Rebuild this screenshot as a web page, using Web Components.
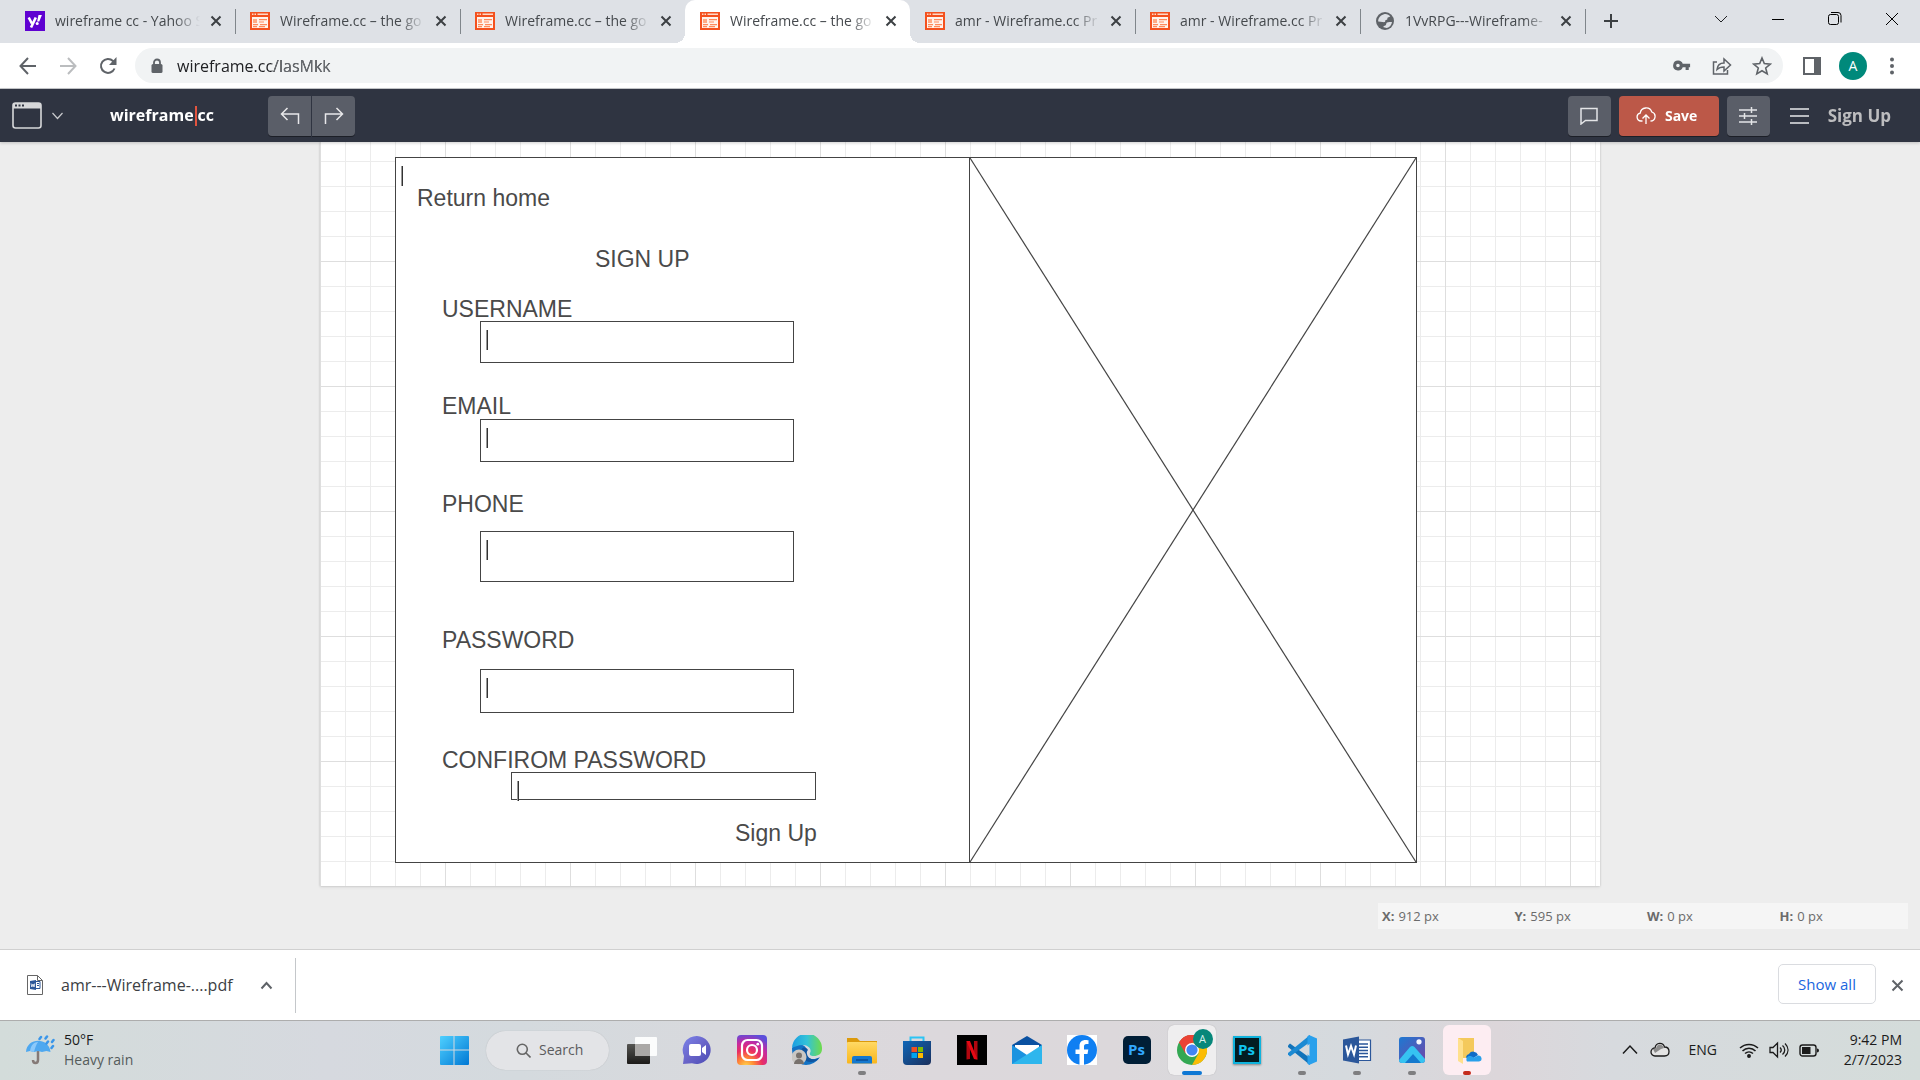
<!DOCTYPE html>
<html lang="en">
<head>
<meta charset="utf-8">
<title>Wireframe.cc – the go-to wireframing tool</title>
<style>
  html, body { margin: 0; height: 100%; }
  body { font-family: "Open Sans", "Noto Sans", sans-serif; font-size: 14px; line-height: 20px; color: #202124; overflow: hidden; }
</style>
</head>
<body>
<desktop-screen></desktop-screen>

<script>
const BASE = `
  *, *::before, *::after { box-sizing: border-box; }
  button { font: inherit; color: inherit; background: none; border: 0; padding: 0; margin: 0; display: inline-flex; align-items: center; justify-content: center; }
  a { color: inherit; text-decoration: none; }
  svg { display: block; flex: none; }
`;
const define = (name, render, after) => customElements.define(name, class extends HTMLElement {
  connectedCallback() {
    if (this.shadowRoot) return;
    const root = this.attachShadow({ mode: "open" });
    const t = document.createElement("template");
    t.innerHTML = `<style>${BASE}</style>` + render(this);
    root.append(t.content.cloneNode(true));
    if (after) after(this, root);
  }
});

const FAVICONS = {
  yahoo: `<svg width="20" height="20" viewBox="0 0 20 20"><path fill="#5f01d1" d="M0 0h20v20H0z"/><path fill="none" stroke="#fff" stroke-width="2.6" d="M3.7 6.5l3.2 6M10.800 6.500L6 16.500"/><path fill="#fff" d="M13.500 4h3.400l-2.600 6.500h-2.200z"/><circle cx="12.200" cy="12.600" r="1.500" fill="#fff"/></svg>`,
  wire: `<svg width="20" height="20" viewBox="0 0 20 20"><rect x="1" y="2" width="18" height="16" fill="#fff3ec" stroke="#f4511e" stroke-width="2"/><path fill="#f4511e" d="M0 1h20v5H0z"/><path fill="#ffd9c7" d="M2 2.500h1.500V4H2zM4.500 2.500H6V4H4.500zM7.500 2.500H18V4H7.500z"/><path fill="#ffab85" d="M3 8h4v4H3z"/><path stroke="#ff8a5c" stroke-width="1.200" d="M9 8.600h8M9 11h5M3 13.700h5M10 13.700h7M3 15.700h4M9 15.700h6"/></svg>`,
  globe: `<svg width="20" height="20" viewBox="0 0 20 20"><circle cx="10" cy="10" r="9" fill="#5f6368"/><path fill="#dee1e6" d="M9 3.200c2.500-.6 5 .5 6.300 2.300-1 .2-1.500 1-2.600.9-.7.800.2 2-1 2.400-1 .3-1.700.400-1.500 1.500.1 1.100-1.600.8-2.700.8-1.200 0-2.600-.2-4.300-.500C3 7 5.500 4 9 3.200zM12 11.500c1.500-1 3-.5 5-.5-.3 3-2.500 5.400-5.200 6-1.300-.6-3-.3-3.600-1 .4-1.300 2.200-1 2.700-1.900.400-.8.2-1.900 1.100-2.600z"/></svg>`
};

define("browser-tab", el => `
  <style>
    :host { flex: 0 1 225px; min-width: 0; position: relative; display: flex; align-items: center; height: 43px; padding: 0 13px 2px 15px; gap: 10px; color: #45494d; }
    :host([active]) { background: #fff; border-radius: 10px 10px 0 0; }
    :host([active])::before, :host([active])::after { content: ""; position: absolute; bottom: 0; width: 10px; height: 10px; }
    :host([active])::before { right: 100%; background: radial-gradient(circle at 0 0, transparent 10px, #fff 10px); }
    :host([active])::after { left: 100%; background: radial-gradient(circle at 100% 0, transparent 10px, #fff 10px); }
    :host([divider])::after { content: ""; position: absolute; right: -1px; top: 9px; width: 1px; height: 25px; background: #80868b; }
    .t { flex: 1; min-width: 0; overflow: hidden; white-space: nowrap; -webkit-mask: linear-gradient(90deg, #000 calc(100% - 26px), transparent); }
  </style>
  ${FAVICONS[el.getAttribute("icon")]}
  <span class="t"><slot></slot></span>
  <button aria-label="Close tab"><svg width="12" height="12" viewBox="0 0 12 12" stroke="#3c4043" stroke-width="2"><path d="M1.500 1.500l9 9M10.500 1.500l-9 9"/></svg></button>`);

define("tab-strip", () => `
  <style>
    :host { display: flex; height: 43px; padding-left: 10px; background: #dee1e6; }
    .new { width: 52px; height: 42px; flex: none; }
    .win { margin-left: auto; display: flex; }
    .win button { width: 57px; height: 38px; }
  </style>
  <browser-tab icon="yahoo" divider>wireframe cc - Yahoo S</browser-tab>
  <browser-tab icon="wire" divider>Wireframe.cc – the go</browser-tab>
  <browser-tab icon="wire">Wireframe.cc – the go</browser-tab>
  <browser-tab icon="wire" active>Wireframe.cc – the go</browser-tab>
  <browser-tab icon="wire" divider>amr - Wireframe.cc Pr</browser-tab>
  <browser-tab icon="wire" divider>amr - Wireframe.cc Pr</browser-tab>
  <browser-tab icon="globe" divider>1VvRPG---Wireframe-</browser-tab>
  <button class="new" aria-label="New tab"><svg width="16" height="16" viewBox="0 0 16 16"><path stroke="#3c4043" stroke-width="2" d="M8 1v14M1 8h14"/></svg></button>
  <div class="win">
    <button aria-label="Search tabs"><svg width="14" height="14" fill="none" stroke="#202124"><path d="M1 4l6 6 6-6"/></svg></button>
    <button aria-label="Minimize"><svg width="14" height="14" stroke="#000"><path d="M1 7.500h12"/></svg></button>
    <button aria-label="Restore"><svg width="14" height="14" fill="none" stroke="#000"><rect x=".5" y="2.500" width="10" height="10" rx="2"/><path d="M3 .500h7a3 3 0 0 1 3 3v7"/></svg></button>
    <button aria-label="Close"><svg width="14" height="14" stroke="#000"><path d="M1 1l12 12M13 1L1 13"/></svg></button>
  </div>`);

define("browser-toolbar", () => `
  <style>
    :host { display: flex; align-items: center; height: 46px; padding: 0 8px; background: #fff; border-bottom: 1px solid #c8cacd; color: #5f6368; }
    .nav { width: 40px; height: 36px; }
    .box { flex: 1; display: flex; align-items: center; height: 35px; margin: 0 7px; padding: 0 11px 0 14px; border-radius: 18px; background: #f1f3f4; }
    .url { position: relative; flex: 1; display: flex; margin-left: 12px; }
    input { flex: 1; border: 0; padding: 0; outline: 0; background: #f1f3f4; color: #202124; font: 16px/24px "Open Sans", "Noto Sans", sans-serif; }
    .path { position: absolute; left: 94px; right: 0; top: 0; bottom: 0; background: #666a6f; mix-blend-mode: lighten; pointer-events: none; }
    .box button { width: 40px; height: 32px; }
    .box button:last-child { width: 20px; margin-left: 10px; }
    .avatar { width: 28px; height: 28px; margin: 0 5px; border-radius: 50%; background: #00897b; color: #fff; }
    .side { width: 44px; }
  </style>
  <button class="nav" aria-label="Back"><svg width="18" height="18" fill="none" stroke="#5f6368" stroke-width="2"><path d="M17 9H2M9 1L1.500 9 9 17"/></svg></button>
  <button class="nav" aria-label="Forward"><svg width="18" height="18" fill="none" stroke="#bbbdbf" stroke-width="2"><path d="M1 9h15M9 1l7.500 8L9 17"/></svg></button>
  <button class="nav" aria-label="Reload"><svg width="18" height="18" fill="none" stroke="#5f6368" stroke-width="2"><path d="M15.500 11.500A7 7 0 1 1 14 4l1.500 1.800"/><path fill="#5f6368" stroke="none" d="M17.500 0v8h-7.500z"/></svg></button>
  <div class="box">
    <svg width="16" height="16" viewBox="0 0 16 16"><rect x="2.500" y="6" width="11" height="9" rx="1.500" fill="#5f6368"/><path fill="none" stroke="#5f6368" stroke-width="1.800" d="M5 7V4.500a3 3 0 0 1 6 0V7"/></svg>
    <div class="url"><input aria-label="Address" value="wireframe.cc/lasMkk"><span class="path"></span></div>
    <button aria-label="Passwords"><svg width="18" height="11" viewBox="0 0 20 12"><path fill="#5f6368" fill-rule="evenodd" d="M6 .500a5.500 5.500 0 1 0 4.800 7.500H14v3h3.500V8H19V4h-8.200A5.500 5.500 0 0 0 6 .500zM5.500 4a2 2 0 1 1 0 4 2 2 0 0 1 0-4z"/></svg></button>
    <button aria-label="Share"><svg width="20" height="20" fill="none" stroke="#5f6368" stroke-width="1.500"><path d="M5 6H1.500v12h14v-4M5 13.500c.5-4.500 3-6.500 7-6.500V3l6.500 6-6.500 6v-4c-3 0-5 .5-7 2.500z"/></svg></button>
    <button aria-label="Bookmark"><svg width="20" height="20" viewBox="0 0 20 20" fill="none" stroke="#5f6368" stroke-width="1.600"><path d="M10 2l2.300 5.600 6 .500-4.600 3.900 1.500 5.900L10 14.700l-5.200 3.200L6.300 12 1.700 8.100l6-.5z"/></svg></button>
  </div>
  <button class="side" aria-label="Side panel"><svg width="18" height="18"><path fill="none" stroke="#5f6368" stroke-width="2" d="M1 1h16v16H1z"/><path fill="#5f6368" d="M11 1h6v16h-6z"/></svg></button>
  <button class="avatar" aria-label="Profile">A</button>
  <button class="nav" aria-label="Menu"><svg width="6" height="18" fill="#5f6368"><circle cx="3" cy="2.500" r="2"/><circle cx="3" cy="9" r="2"/><circle cx="3" cy="15.500" r="2"/></svg></button>`);

define("app-header", () => `
  <style>
    :host { position: relative; z-index: 1; display: flex; align-items: center; height: 53px; padding: 0 29px 0 12px; background: #2f3441; color: #fff; box-shadow: 0 1px 3px #0003; }
    .doc { gap: 10px; }
    .logo { display: flex; width: 110px; margin-left: 47px; font-size: 16px; font-weight: 700; }
    .logo i { width: 2px; height: 20px; margin: 1px 1px 0; background: #e2543f; }
    .undo { display: flex; gap: 1px; margin-left: 48px; }
    .b { width: 43px; height: 40px; border-radius: 4px; background: #5a5e68; box-shadow: 0 1px 0 #1c1f27; }
    .undo .b:first-child { border-radius: 4px 0 0 4px; }
    .undo .b:last-child { border-radius: 0 4px 4px 0; }
    .right { margin-left: auto; display: flex; align-items: center; gap: 8px; }
    .save { width: 100px; gap: 9px; padding-right: 4px; background: #bc5848; font-weight: 700; }
    .menu { margin: 0 11px 0 12px; }
    .sign { font-size: 17px; font-weight: 700; color: #bdbdbf; }
  </style>
  <button class="doc" aria-label="Canvas type">
    <svg width="30" height="28" viewBox="0 0 30 28"><rect x="1" y="1" width="28" height="25" rx="2.500" fill="none" stroke="#d6d7d9" stroke-width="1.600"/><path fill="#d6d7d9" d="M1 1h28v5.500H1z"/><path fill="#2f3441" d="M3 2.500h2v2H3zM6.500 2.500h2v2h-2zM10 2.500h2v2h-2z"/></svg>
    <svg width="11" height="8" fill="none" stroke="#c9cacd" stroke-width="1.200"><path d="M.5 1l5 5.500 5-5.500"/></svg>
  </button>
  <a class="logo" href="#" aria-label="wireframe.cc">wireframe<i></i>cc</a>
  <div class="undo">
    <button class="b" aria-label="Undo"><svg width="20" height="18" fill="none" stroke="#e8e8ea" stroke-width="1.500"><path d="M7.500 1L1.500 7l6 6M1.500 7h17v10"/></svg></button>
    <button class="b" aria-label="Redo"><svg width="20" height="18" fill="none" stroke="#e8e8ea" stroke-width="1.500"><path d="M12.500 1l6 6-6 6M18.500 7h-17v10"/></svg></button>
  </div>
  <div class="right">
    <button class="b" aria-label="Comments"><svg width="18" height="18" fill="none" stroke="#e4e5e7" stroke-width="1.500"><path d="M1 1.500h16v12H5.500L1 17z"/></svg></button>
    <button class="b save"><svg width="20" height="18" fill="none" stroke="#fff" stroke-width="1.300"><path d="M6.500 14H5a4 4 0 0 1-.8-7.900A6 6 0 0 1 15.800 5a4.600 4.600 0 0 1-1.300 9M10 17V8.500M6.500 11.500L10 8l3.500 3.500"/></svg>Save</button>
    <button class="b" aria-label="Settings"><svg width="18" height="18" stroke="#e4e5e7" stroke-width="1.500"><path d="M0 3h18M0 9h18M0 15h18M12.500 0v6M5.500 6v6M12.500 12v6"/></svg></button>
    <button class="menu" aria-label="Menu"><svg width="19" height="18" stroke="#e8e8ea" stroke-width="1.500"><path d="M0 2h19M0 9h19M0 16h19"/></svg></button>
    <a class="sign" href="#">Sign Up</a>
  </div>`);

/* Canvas nodes: x, y, w and h are the node's place on the free drawing canvas. */
const place = el => {
  for (const [k, p] of [["x", "left"], ["y", "top"], ["w", "width"], ["h", "height"]])
    if (el.hasAttribute(k)) el.style[p] = el.getAttribute(k) + "px";
};
define("wire-text", () => `
  <style>:host { position: absolute; white-space: nowrap; font: 23px/28px "Liberation Sans", Arial, sans-serif; color: #4a4a4a; }</style><slot></slot>`, place);
define("wire-field", el => `
  <style>
    :host { position: absolute; display: block; }
    :host::after { content: ""; position: absolute; left: 6px; top: 9px; width: 2px; height: 20px; background: linear-gradient(90deg, #999 50%, #333 50%); pointer-events: none; }
    input, div { display: block; width: 100%; height: 100%; border: 1px solid #444; background: #fff; padding: 4px 10px; outline: 0; border-radius: 0; }
  </style>${el.hasAttribute("box") ? "<div></div>" : `<input aria-label="${el.getAttribute("label")}">`}`, place);
define("wire-image", () => `
  <style>:host { position: absolute; display: block; box-sizing: border-box; border: 1px solid #444; background: #fff; } svg { width: 100%; height: 100%; }</style>
  <svg stroke="#444" stroke-width="1.200"><line x1="0" y1="0" x2="100%" y2="100%"/><line x1="100%" y1="0" x2="0" y2="100%"/></svg>`, place);

define("wire-workspace", () => `
  <style>
    :host { flex: 1; min-height: 0; overflow: hidden; display: flex; flex-direction: column; background: #ededed; border-bottom: 1px solid #d0d0d0; }
    .page { position: relative; width: 1280px; height: 744px; flex: none; margin: 0 auto; background-color: #fff; box-shadow: 0 0 2px #0003, 0 2px 3px #0000000d;
      background-image: linear-gradient(90deg, #dedede 1px, transparent 1px), linear-gradient(#dedede 1px, transparent 1px), linear-gradient(90deg, #ececec 1px, transparent 1px), linear-gradient(#ececec 1px, transparent 1px);
      background-size: 125px 125px, 125px 125px, 25px 25px, 25px 25px; background-position: 0 -6px; }
    dl { display: grid; grid-template-columns: repeat(4, 1fr); width: 530px; height: 26px; margin: 17px 12px 0 auto; background: #f5f5f5; color: #6b6b6b; font-size: 13px; line-height: 27px; }
    dl div { display: flex; gap: 4px; padding-left: 4px; }
    dt { font-weight: 700; } dd { margin: 0; }
  </style>
  <div class="page">
    <wire-field box x="75" y="15" w="1022" h="706"></wire-field>
    <wire-image x="649" y="15" w="448" h="706"></wire-image>
    <wire-text x="97" y="42">Return home</wire-text>
    <wire-text x="275" y="103">SIGN UP</wire-text>
    <wire-text x="122" y="153">USERNAME</wire-text>
    <wire-field x="160" y="179" w="314" h="42" label="Username"></wire-field>
    <wire-text x="122" y="250">EMAIL</wire-text>
    <wire-field x="160" y="277" w="314" h="43" label="Email"></wire-field>
    <wire-text x="122" y="348">PHONE</wire-text>
    <wire-field x="160" y="389" w="314" h="51" label="Phone"></wire-field>
    <wire-text x="122" y="484">PASSWORD</wire-text>
    <wire-field x="160" y="527" w="314" h="44" label="Password"></wire-field>
    <wire-text x="122" y="604">CONFIROM PASSWORD</wire-text>
    <wire-field x="191" y="630" w="305" h="28" label="Confirm password"></wire-field>
    <wire-text x="415" y="677">Sign Up</wire-text>
  </div>
  <dl>
    <div><dt>X:</dt><dd>912 px</dd></div><div><dt>Y:</dt><dd>595 px</dd></div>
    <div><dt>W:</dt><dd>0 px</dd></div><div><dt>H:</dt><dd>0 px</dd></div>
  </dl>`);

define("download-bar", () => `
  <style>
    :host { display: flex; align-items: center; height: 70px; padding-right: 16px; background: #fff; color: #3c4043; }
    .item { display: flex; align-items: center; width: 296px; height: 55px; padding: 0 21px 0 26px; border-right: 1px solid #c4c7ca; font-size: 16px; }
    .item a { margin: 0 auto 0 17px; }
    .item button { width: 15px; }
    .all { margin-left: auto; width: 98px; height: 40px; margin-bottom: 2px; border: 1px solid #dadce0; border-radius: 5px; color: #1a66e0; font-size: 15px; }
    .x { margin-left: 15px; }
  </style>
  <div class="item">
    <svg width="18" height="22" viewBox="0 0 18 22"><path fill="#fff" stroke="#666" d="M1.500 1.500h10l5 5v14h-15z"/><path fill="none" stroke="#666" d="M11.500 1.500v5h5"/><path fill="#2b579a" d="M4 7l6-1v10l-6-1z"/><path fill="none" stroke="#2b579a" d="M10 7.500h4v7h-4M11 9.500h2M11 11.500h2"/><path fill="none" stroke="#fff" stroke-width=".8" d="M5 9.500l.8 3.500L7 10l1 3 .8-3.500"/></svg>
    <a href="#">amr---Wireframe-....pdf</a>
    <button aria-label="Options"><svg width="13" height="9" fill="none" stroke="#5f6368" stroke-width="2"><path d="M1.500 7.500l5-5.500 5 5.500"/></svg></button>
  </div>
  <button class="all">Show all</button>
  <button class="x" aria-label="Close"><svg width="13" height="13" stroke="#5f6368" stroke-width="2"><path d="M1.500 1.500l10 10M11.500 1.500l-10 10"/></svg></button>`);

const S = (body) => `<svg width="30" height="30" viewBox="0 0 30 30">${body}</svg>`;
const APPS = {
  start: S(`<defs><linearGradient id="g" x2="1" y2="1"><stop stop-color="#4fd0ff"/><stop offset="1" stop-color="#0078d4"/></linearGradient></defs><path fill="url(#g)" d="M1 2a1 1 0 0 1 1-1h12.500v13.500H1zM15.500 1H29a1 1 0 0 1 1 1v12.500H15.500zM1 15.500h13.500V30H2a1 1 0 0 1-1-1zM15.500 15.500H30V29a1 1 0 0 1-1 1H15.500z"/>`),
  view: S(`<defs><linearGradient id="g" x2="0" y2="1"><stop stop-color="#555552"/><stop offset="1" stop-color="#1c1b19"/></linearGradient></defs><rect y="9" width="23" height="20" rx="1" fill="url(#g)"/><rect x="8" y="2" width="22" height="19" rx="1" fill="#fff" opacity=".9"/><path fill="#aaa8a6" d="M8 9h15v12H8z"/>`),
  chat: S(`<defs><linearGradient id="g" x2="1" y2="1"><stop stop-color="#7b83eb"/><stop offset=".5" stop-color="#6a65c9"/><stop offset="1" stop-color="#4b4bb5"/></linearGradient></defs><path fill="url(#g)" d="M15 1a14 14 0 1 1-5 27.200L1 29l1-8A14 14 0 0 1 15 1z"/><rect x="7" y="9" width="12" height="12" rx="2" fill="#fff"/><path fill="#fff" d="M20 13l4-3v10l-4-3z"/>`),
  insta: S(`<defs><radialGradient id="g" cx=".3" cy="1.050" r="1.100"><stop stop-color="#ffd94f"/><stop offset=".25" stop-color="#ff8a35"/><stop offset=".5" stop-color="#ea2f62"/><stop offset=".75" stop-color="#c32aa3"/><stop offset="1" stop-color="#5b4fdb"/></radialGradient></defs><rect width="30" height="30" rx="4" fill="url(#g)"/><g fill="none" stroke="#fff" stroke-width="2.200"><rect x="5" y="5" width="20" height="20" rx="5.500"/><circle cx="15" cy="15" r="5"/></g><circle cx="20.800" cy="9.200" r="1.400" fill="#fff"/>`),
  edge: S(`<defs><linearGradient id="g" x2="1"><stop stop-color="#1b9de2"/><stop offset=".5" stop-color="#33c3d8"/><stop offset="1" stop-color="#6fdb4a"/></linearGradient></defs><path fill="#1272c4" d="M0 13c5-5 12-4 14 0-3 4-1 10 5 11 4 .5 7-1 9-2-5 8-15 10-21 6C2 25 0 20 0 13z"/><path fill="url(#g)" d="M0 13A15 15 0 0 1 30 14c0 5-4 7-8 7-3 0-5-1-4-3 2-3-1-8-7-8-5 0-9 2-11 3z"/><path fill="#0f55a0" d="M10 14c-3 5 1 13 9 13 4 0 7-2 8-4-5 3-11 1-12-4-.5-2 0-3 1-4-2-3-5-3-6-1z"/><circle cx="7" cy="22" r="7.500" fill="#c9c7c4"/><circle cx="7" cy="20.500" r="3" fill="#77716d"/><path fill="#77716d" d="M2 29a5 5 0 0 1 10 0z"/>`),
  folder: S(`<defs><linearGradient id="g" x2="0" y2="1"><stop stop-color="#ffd965"/><stop offset="1" stop-color="#f9b61b"/></linearGradient></defs><path fill="#dc9a0c" d="M0 3h10l3 3h17v6H0z"/><rect y="7" width="30" height="21.500" rx="1" fill="url(#g)"/><path fill="#1478cf" d="M5 28.500V23a2 2 0 0 1 2-2h16a2 2 0 0 1 2 2v5.500z"/><path stroke="#0a4c94" stroke-width="1.500" d="M9 25h12"/>`),
  store: S(`<defs><linearGradient id="g" x2="1" y2="1"><stop stop-color="#0f66b8"/><stop offset="1" stop-color="#1a2f5c"/></linearGradient></defs><path fill="none" stroke="#2cc4f4" stroke-width="2" d="M8.500 7V2.500h13V7"/><path fill="url(#g)" d="M1 6h28v20a4 4 0 0 1-4 4H5a4 4 0 0 1-4-4z"/><path fill="#f25022" d="M9.500 12H15v5H9.500z"/><path fill="#7fba00" d="M16 12h5v5h-5z"/><path fill="#00a4ef" d="M9.500 18H15v5H9.500z"/><path fill="#ffb900" d="M16 18h5v5h-5z"/>`),
  netflix: S(`<path fill="#000" d="M0 0h30v30H0z"/><path fill="#b1060f" d="M9.500 6h3.500v18l-3.500.5zM17 6h3.500v18.500L17 24z"/><path fill="#e50914" d="M9.500 6H13l7.500 18.500L17 24z"/>`),
  mail: S(`<path fill="#0a51a1" d="M0 10L15 1l15 9v5H0z"/><path fill="#fff" d="M3 10h24v10H3z"/><path fill="#1b93e0" d="M0 10l15 10L30 10v19H0z"/><path fill="#35c1f1" d="M0 29L30 10v19z" opacity=".75"/>`),
  fb: S(`<path fill="#fff" d="M0 0h30v30H0z"/><circle cx="15" cy="15" r="15" fill="#0f7ff2"/><path fill="#fff" d="M12.500 30V19H8.500v-4.500h4V11c0-4 2.500-6 6-6 1.500 0 3 .3 3 .3V9h-2c-2 0-2.500 1.200-2.500 2.500v3h4.300l-.8 4.500H17v11z"/>`),
  chrome: S(`<circle cx="15" cy="15" r="15" fill="#34a853"/><path fill="#ea4335" d="M15 15L2 7.500A15 15 0 0 1 28 7.500H15z"/><path fill="#fbbc04" d="M15 7.500h13A15 15 0 0 1 15 30l6.500-11.500z"/><path fill="#ea4335" d="M2 7.500A15 15 0 0 1 28 7.500H15l-6.500 11z"/><circle cx="15" cy="15" r="7" fill="#fff"/><circle cx="15" cy="15" r="5.600" fill="#4285f4"/>`),
  code: S(`<path fill="#1173ba" d="M1 10.500l2-2L23 23v7L1 12z"/><path fill="#1b8ad3" d="M1 19.500l2 2L23 7V0L1 18z"/><path fill="#29a0ec" d="M22 0l8 3.500v23L22 30l-1.500-1.500v-27z"/><path fill="#d6dadd" d="M22.500 9v12L14.500 15z"/>`),
  word: S(`<path fill="#fff" stroke="#2b579a" stroke-width="1.200" d="M16 5h12.500v20.500H16z"/><path stroke="#2b579a" stroke-width="1.500" d="M17 9h9M17 12.200h9M17 15.400h9M17 18.600h9M17 21.800h9"/><path fill="#2b579a" d="M1 4.500L17 1.500v27L1 25.500z"/><path fill="none" stroke="#fff" stroke-width="2" d="M4 10.500l2 9 3-8.500 3 8.500 2-9"/>`),
  photos: S(`<defs><linearGradient id="g" x2="1" y2="1"><stop stop-color="#1d79d2"/><stop offset="1" stop-color="#7346a8"/></linearGradient></defs><rect x="2" y="2" width="26" height="26" rx="3" fill="url(#g)"/><path fill="#36c3f1" d="M2 25L13 12c1.500-1.500 3-1.500 4.500 0L28 24v1a3 3 0 0 1-3 3H5a3 3 0 0 1-3-3z"/><path fill="#1479ce" d="M8 28l8-9 8 9z"/><circle cx="22" cy="6.800" r="2.600" fill="#f4f7ff"/>`),
  drive: S(`<path fill="#f4c95c" d="M6 3h16v20H6z"/><path fill="#ffe08d" d="M6 3l5 3v23l-5-3z"/><path fill="#0f6cc7" d="M14 22a4 4 0 0 1 3-3 5 5 0 0 1 9 1l-9 6z"/><path fill="#28a0ea" d="M15 26.500a3.500 3.500 0 0 1 1-5c2-1 4 0 6 1l4-2a3 3 0 0 1 1 6z"/>`)
};
const LABELLED = {
  ps: `<span class="ps">Ps</span>`,
  ps2: `<span class="ps old">Ps</span>`
};
define("task-icon", el => `
  <style>
    :host { display: flex; width: 55px; height: 57px; align-items: center; justify-content: center; }
    button { position: relative; width: 48px; height: 50px; border-radius: 6px; }
    :host([active]) button { background: #efeeef; box-shadow: 0 0 1px #0004; }
    :host([alert]) button { background: #fdedf2; }
    :host([open]) button::after, :host([active]) button::after, :host([alert]) button::after { content: ""; position: absolute; bottom: 0; left: 20px; width: 8px; height: 4px; border-radius: 2px; background: #7e7e80; }
    :host([active]) button::after { left: 14px; width: 20px; background: #0f78d4; }
    :host([alert]) button::after { background: #c42b1c; }
    .ps { width: 28px; height: 28px; border-radius: 5px; background: #001e36; color: #31a8ff; font-weight: 700; font-size: 15px; line-height: 27px; }
    .old { border: 2px solid #10b3dd; border-radius: 0; background: #021c22; color: #10c4f0; line-height: 23px; box-shadow: 0 1px 2px #0006; }
    .badge { position: absolute; right: 3px; top: 4px; width: 20px; height: 20px; border-radius: 50%; background: #07877a; color: #d7f0ec; font-size: 11px; line-height: 20px; }
  </style>
  <button aria-label="${el.getAttribute("app")}">${APPS[el.getAttribute("app")] || LABELLED[el.getAttribute("app")]}${el.hasAttribute("badge") ? `<span class="badge">${el.getAttribute("badge")}</span>` : ""}</button>`);

define("task-bar", () => `
  <style>
    :host { display: grid; grid-template-columns: 1fr auto 1fr; align-items: start; height: 60px; border-top: 1px solid #adadad; background: linear-gradient(90deg, #d3dcda 0, #d6d9df 17%, #d4dade 27%, #dcd8dc 48%, #dcd8db 58%, #d5dade 70%, #dcd6da 78%, #d7dade 84%, #d4dcda 100%); color: #1b1b1b; }
    .weather, .apps, .tray { display: flex; align-items: center; height: 58px; }
    .weather { gap: 8px; padding-left: 26px; }
    .weather span { display: block; color: #555c5c; } .weather span:first-child { color: #1b1b1b; }
    .search { display: flex; align-items: center; width: 123px; height: 39px; margin: 0 5px; padding-left: 30px; gap: 8px; border-radius: 20px; background: #e3e4e7; box-shadow: 0 0 1px #0003; }
    .search input { width: 60px; border: 0; padding: 0; background: none; font: inherit; outline: 0; }
    .search input::placeholder { color: #5b5b5d; opacity: 1; }
    .tray { justify-content: flex-end; padding-right: 18px; }
    .tray svg { margin-right: 10px; }
    .tray .lang { margin: 0 22px 0 9px; }
    .clock { margin-left: 10px; text-align: right; width: 63px; white-space: nowrap; display: flex; flex-direction: column; align-items: flex-end; }
  </style>
  <div class="weather">
    <svg width="30" height="30" viewBox="0 0 30 30"><path fill="none" stroke="#857a77" stroke-width="2.500" d="M12 6v19c0 4-5 4-5 0"/><path fill="#4ea8f0" d="M0 17C1 2 23 2 24.500 17l-4-1-4.500 1-4-1-4 1-4-1z"/><path fill="#8cc9fa" d="M4 16c1-6 4-9 8-9-2 3-3 6-4 10z"/><path stroke="#3a96ea" stroke-width="2.500" stroke-linecap="round" d="M15 2l-1.500 2M21 1.500L19.500 3.500M27.500 5L26 7M22 6.500L20.500 8.500M27 11l-1.500 2"/></svg>
    <div><span>50°F</span><span>Heavy rain</span></div>
  </div>
  <div class="apps">
    <task-icon app="start"></task-icon>
    <label class="search"><svg width="15" height="15" fill="none" stroke="#666" stroke-width="1.600"><circle cx="6.300" cy="6.300" r="5"/><path d="M10 10l4.500 4.500"/></svg><input placeholder="Search" aria-label="Search"></label>
    <task-icon app="view"></task-icon><task-icon app="chat"></task-icon><task-icon app="insta"></task-icon><task-icon app="edge"></task-icon>
    <task-icon app="folder" open></task-icon><task-icon app="store"></task-icon><task-icon app="netflix"></task-icon><task-icon app="mail"></task-icon>
    <task-icon app="fb"></task-icon><task-icon app="ps"></task-icon><task-icon app="chrome" active badge="A"></task-icon><task-icon app="ps2"></task-icon>
    <task-icon app="code" open></task-icon><task-icon app="word" open></task-icon><task-icon app="photos" open></task-icon><task-icon app="drive" alert></task-icon>
  </div>
  <div class="tray">
    <svg width="20" height="20" fill="none" stroke="#1b1b1b" stroke-width="1.500"><path d="M3 13.500l7-7.500 7 7.500"/></svg>
    <svg width="20" height="20"><path fill="#e4e4e4" stroke="#1b1b1b" stroke-width="1.300" d="M5 16a4 4 0 0 1 0-8C6 2 13 2 14.500 7c6 0 6 9 0 9z"/><path fill="#8b8b8b" d="M3 9c1-1 2-.5 3-.5C7 3 12.500 3.500 14 8l-3 1-6 4z"/></svg>
    <span class="lang">ENG</span>
    <svg width="20" height="20" fill="none" stroke="#1b1b1b" stroke-width="1.500"><path d="M1 8a13 13 0 0 1 18 0M3.500 11a9 9 0 0 1 13 0M6 13.500a6 6 0 0 1 8 0"/><circle cx="10" cy="16" r="1.200" fill="#1b1b1b"/></svg>
    <svg width="20" height="20" fill="none" stroke="#1b1b1b" stroke-width="1.300"><path d="M1 7.500h3L8.500 3v14L4 12.500H1zM11 7.500c1.500 1.500 1.500 3.500 0 5M13.500 5.500c3 2.500 3 6.500 0 9M16 3.500c4 4 4 9 0 13"/></svg>
    <svg width="20" height="20" fill="none" stroke="#1b1b1b" stroke-width="1.400"><rect x="1" y="5" width="16" height="11" rx="2.500"/><path fill="#1b1b1b" stroke="none" d="M3 7h8.500v7H3zM18 8.500a2 2 0 0 1 0 4z"/></svg>
    <div class="clock"><time>9:42 PM</time><time>2/7/2023</time></div>
  </div>`);

define("desktop-screen", () => `
  <style>:host { display: flex; flex-direction: column; height: 100vh; }</style>
  <tab-strip></tab-strip>
  <browser-toolbar></browser-toolbar>
  <app-header></app-header>
  <wire-workspace></wire-workspace>
  <download-bar></download-bar>
  <task-bar></task-bar>`);
</script>
</body>
</html>
